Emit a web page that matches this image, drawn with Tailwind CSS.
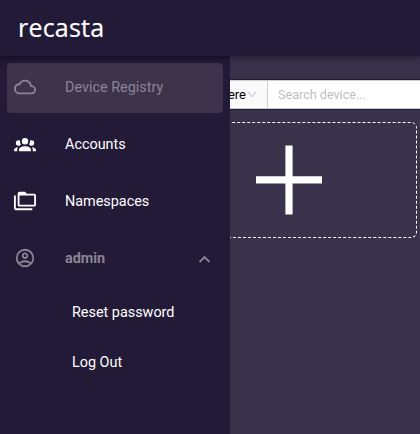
<!DOCTYPE html>
<html lang="en">
<head>
<meta charset="utf-8">
<title>recasta</title>
<script src="https://cdn.jsdelivr.net/npm/@tailwindcss/browser@4"></script>
</head>
<body class="relative flex h-[434px] w-[420px] flex-col overflow-hidden bg-[#3a314b] font-[Roboto,sans-serif] text-white">
<header class="relative z-20 flex h-14 shrink-0 items-center bg-[#231a38] pl-[18px] shadow-[0_2px_4px_-1px_rgba(0,0,0,.2),0_4px_5px_rgba(0,0,0,.14),0_1px_10px_rgba(0,0,0,.12)]">
  <span class="-mt-0.5 font-['Open_Sans',sans-serif] text-[25px] leading-8 tracking-[0.2px] [-webkit-text-stroke:0.2px_white]">recasta</span>
</header>

<main class="flex flex-col pt-[23px]">
  <div class="-mr-4 flex h-[31px] border-y border-[#231a38]">
    <div class="flex w-[268px] items-center justify-end border-y border-r border-[#d0d0d0] bg-[#fafafa] pr-2.5 text-[13px] text-black">
      <span>Search here</span>
      <svg class="ml-px h-2.5 w-2.5" viewBox="0 0 10 10" fill="none" stroke="#bfbfbf" stroke-width="1"><path d="M.7 1.3 5 6.900 9.300 1.300"/></svg>
    </div>
    <div class="flex flex-1 items-center border-y border-[#d0d0d0] bg-white pt-0.5 pl-2.5 text-[12.6px] text-[#bfbfbf]">Search device...</div>
  </div>
  <div class="mt-3 ml-[161px] flex h-[116px] w-64 items-center justify-center rounded-md border border-dashed border-white">
    <svg class="h-[70px] w-[66px]" viewBox="0 0 66 70" fill="#fff"><path d="M29.400.4h7.200v30.900H66v7.200H36.600v31.100h-7.200V38.500H0v-7.200h29.400z"/></svg>
  </div>
</main>

<aside class="absolute top-14 bottom-0 left-0 z-10 w-[230px] bg-[#231a38] px-[7px] pt-[7px] text-[14.4px]">
  <nav class="flex flex-col gap-[7px]">
    <a class="flex h-[50px] items-center rounded bg-[#3d334b] pl-[7px] text-[#8b8494]">
      <svg class="-mt-0.5 mr-[29px] h-[22px] w-[22px]" viewBox="0 0 24 24" fill="currentColor"><path d="M19 18H6a4 4 0 0 1-4-4 4 4 0 0 1 4-4h.71C7.37 7.69 9.5 6 12 6a5.5 5.5 0 0 1 5.5 5.5v.5H19a3 3 0 0 1 3 3 3 3 0 0 1-3 3m.35-7.97A7.49 7.49 0 0 0 12 4C9.11 4 6.6 5.64 5.35 8.03A6.004 6.004 0 0 0 0 14a6 6 0 0 0 6 6h13a5 5 0 0 0 5-5c0-2.64-2.05-4.78-4.65-4.97Z"/></svg>
      <span>Device Registry</span>
    </a>
    <a class="flex h-[50px] items-center pl-[7px]">
      <svg class="-mt-0.5 mr-[29px] h-[22px] w-[22px]" viewBox="0 0 24 24" fill="currentColor"><path d="M12 5.5A3.5 3.5 0 0 1 15.5 9a3.5 3.5 0 0 1-3.5 3.5A3.5 3.5 0 0 1 8.500 9 3.5 3.5 0 0 1 12 5.500M5 8c.56 0 1.080.15 1.530.42-.15 1.430.27 2.850 1.130 3.960C7.160 13.340 6.160 14 5 14a3 3 0 0 1-3-3 3 3 0 0 1 3-3m14 0a3 3 0 0 1 3 3 3 3 0 0 1-3 3c-1.160 0-2.160-.66-2.660-1.620a5.536 5.536 0 0 0 1.130-3.960c.45-.27.970-.42 1.530-.42M5.500 18.250c0-2.070 2.910-3.750 6.500-3.750s6.500 1.680 6.500 3.750V20h-13v-1.750M0 20v-1.500c0-1.390 1.890-2.560 4.450-2.900-.59.680-.95 1.620-.95 2.650V20H0m24 0h-3.500v-1.750c0-1.030-.36-1.970-.95-2.650 2.560.34 4.450 1.510 4.450 2.900V20Z"/></svg>
      <span>Accounts</span>
    </a>
    <a class="flex h-[50px] items-center pl-[7px]">
      <svg class="-mt-0.5 mr-[29px] h-[22px] w-[22px]" viewBox="0 0 24 24" fill="currentColor"><path d="M22 4a2 2 0 0 1 2 2v10a2 2 0 0 1-2 2H6a2 2 0 0 1-2-2V4a2 2 0 0 1 2-2h6l2 2h8M2 6v14h18v2H2a2 2 0 0 1-2-2V6h2m4 0v10h16V6H6Z"/></svg>
      <span>Namespaces</span>
    </a>
    <a class="flex h-[50px] items-center pr-[11px] pb-0.5 pl-[7px] font-bold text-[#8b8494]">
      <svg class="mr-[29px] h-[22px] w-[22px]" viewBox="0 0 24 24" fill="currentColor"><path d="M12 2A10 10 0 0 0 2 12a10 10 0 0 0 10 10 10 10 0 0 0 10-10A10 10 0 0 0 12 2M7.070 18.280C7.500 17.380 10.120 16.500 12 16.500s4.500.88 4.930 1.780A7.893 7.893 0 0 1 12 20c-1.860 0-3.570-.64-4.930-1.720m11.290-1.450c-1.430-1.740-4.900-2.330-6.360-2.330s-4.930.59-6.360 2.330A7.928 7.928 0 0 1 4 12c0-4.410 3.590-8 8-8s8 3.590 8 8c0 1.820-.62 3.500-1.640 4.830M12 6c-1.940 0-3.500 1.560-3.500 3.500S10.060 13 12 13s3.500-1.560 3.500-3.500S13.940 6 12 6m0 5a1.500 1.500 0 0 1-1.500-1.500A1.500 1.500 0 0 1 12 8a1.500 1.500 0 0 1 1.500 1.500A1.500 1.500 0 0 1 12 11Z"/></svg>
      <span class="pt-0.5 text-[14.4px]">admin</span>
      <svg class="mt-0.5 ml-auto h-[15px] w-[15px]" viewBox="0 0 15 15" fill="none" stroke="currentColor" stroke-width="1.900"><path d="m2.500 10 5-5 5 5"/></svg>
    </a>
  </nav>
  <div class="mt-1 flex flex-col pl-[65px]">
    <a class="flex h-[50px] items-center">Reset password</a>
    <a class="flex h-[50px] items-center">Log Out</a>
  </div>
</aside>
</body>
</html>
